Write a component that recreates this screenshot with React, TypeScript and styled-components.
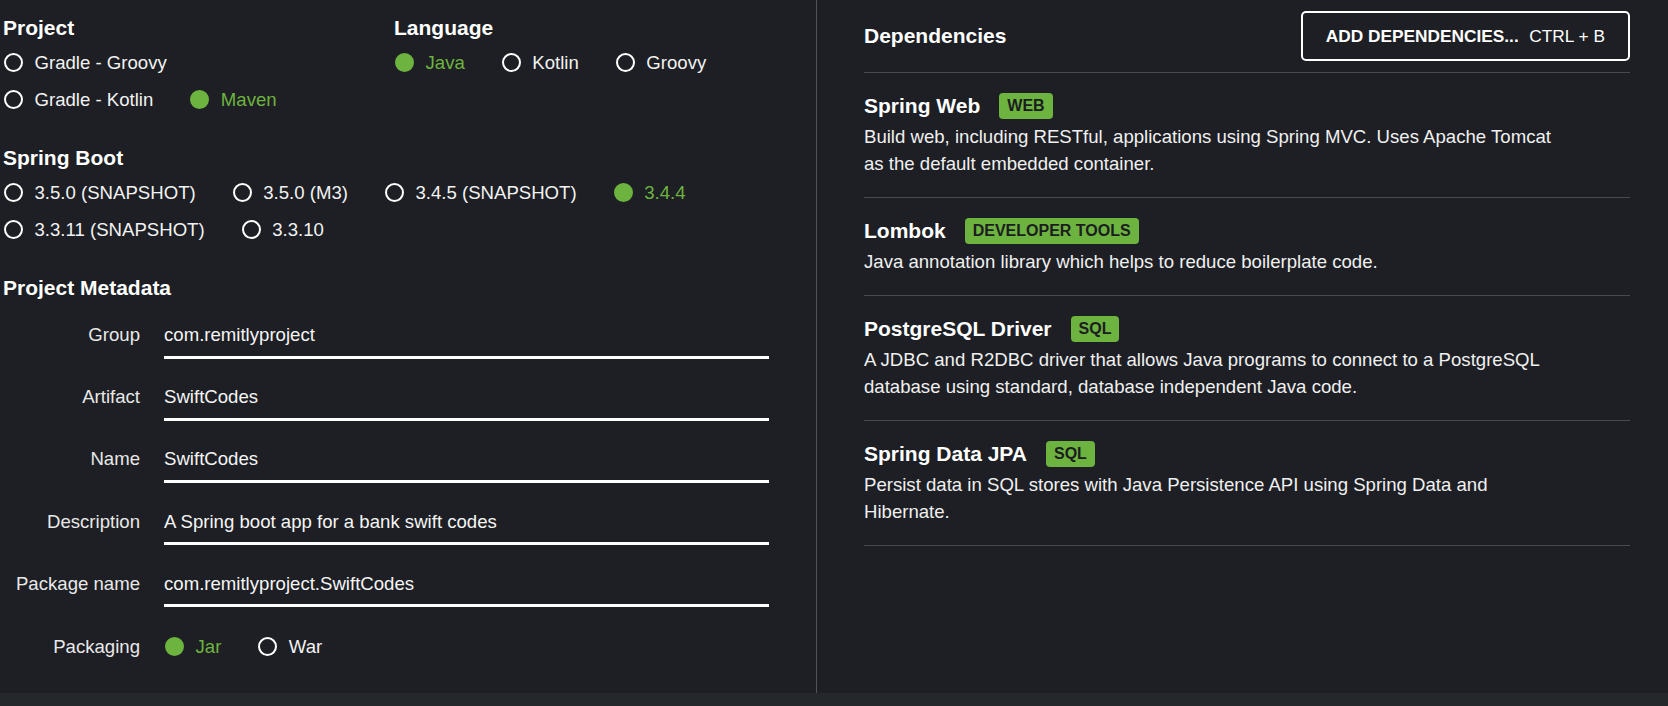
import React from 'react';
import styled, { createGlobalStyle } from 'styled-components';

const GlobalStyle = createGlobalStyle`
  html, body {
    margin: 0;
    padding: 0;
    background: #1d1f24;
    overflow: hidden;
  }
  body {
    font-family: "Liberation Sans", Arial, sans-serif;
    color: #f2f2f2;
  }
  * { box-sizing: border-box; }
`;

const GREEN = '#6db33f';

const Page = styled.div`
  width: 1668px;
  height: 706px;
  display: flex;
  flex-direction: column;
  background: #1d1f24;
`;

const Main = styled.div`
  display: grid;
  grid-template-columns: 817px 1fr;
  height: 693px;
`;

const Footer = styled.div`
  height: 13px;
  background: #25282b;
`;

const LeftPanel = styled.div`
  border-right: 1px solid #505358;
  padding: 16px 0 0 3px;
  display: flex;
  flex-direction: column;
  gap: 28px;
`;

const TopGrid = styled.div`
  display: grid;
  grid-template-columns: 391px 1fr;
`;

const Section = styled.section`
  display: flex;
  flex-direction: column;
`;

const Heading = styled.h2`
  margin: 0 0 4px;
  font-size: 21px;
  line-height: 24px;
  font-weight: 700;
  color: #ffffff;
`;

const RadioRow = styled.div<{ $h?: number }>`
  display: flex;
  align-items: center;
  gap: 36px;
  height: ${(p) => p.$h ?? 37}px;
`;

const RadioItem = styled.label<{ $on?: boolean }>`
  display: inline-flex;
  align-items: center;
  gap: 11.5px;
  font-size: 18.6px;
  line-height: 24px;
  color: ${(p) => (p.$on ? GREEN : '#f2f2f2')};
  white-space: nowrap;
`;

const Circle = styled.span<{ $on?: boolean }>`
  display: inline-block;
  width: 19px;
  height: 19px;
  margin-left: 1px;
  border-radius: 50%;
  border: ${(p) => (p.$on ? `2px solid ${GREEN}` : '2px solid #ffffff')};
  background: ${(p) => (p.$on ? GREEN : 'transparent')};
`;

const Fields = styled.div`
  display: flex;
  flex-direction: column;
  gap: 26.7px;
  padding-top: 19px;
`;

const FieldRow = styled.div<{ $center?: boolean; $h?: number }>`
  display: grid;
  grid-template-columns: 137px 605px;
  column-gap: 24px;
  align-items: ${(p) => (p.$center ? 'center' : 'start')};
  ${(p) => (p.$h ? `height: ${p.$h}px;` : '')}
`;

const FieldLabel = styled.div`
  text-align: right;
  font-size: 18.6px;
  line-height: 24px;
  color: #e8e8e8;
  white-space: nowrap;
`;

const FieldValue = styled.div`
  font-size: 18.6px;
  line-height: 24px;
  color: #f5f5f5;
  padding-bottom: 8.5px;
  border-bottom: 3px solid #ffffff;
  white-space: nowrap;
`;

const RightPanel = styled.div`
  padding: 11px 38px 0 47px;
  display: flex;
  flex-direction: column;
`;

const DepHeader = styled.div`
  display: flex;
  align-items: center;
  justify-content: space-between;
  padding-bottom: 11px;
  border-bottom: 1px solid #474a4f;
`;

const DepTitle = styled.h2`
  margin: 0;
  font-size: 21px;
  line-height: 24px;
  font-weight: 700;
  color: #ffffff;
`;

const AddButton = styled.button`
  height: 50px;
  display: flex;
  align-items: center;
  gap: 10.6px;
  padding: 0 23px;
  border: 2px solid #ffffff;
  border-radius: 5px;
  background: transparent;
  color: #ffffff;
  font-family: "Liberation Sans", Arial, sans-serif;
  font-size: 17.3px;
  cursor: pointer;
`;

const ButtonMain = styled.span`
  font-weight: 700;
`;

const ButtonShortcut = styled.span`
  font-weight: 400;
`;

const DepItem = styled.div`
  padding: 20px 0;
  border-bottom: 1px solid #474a4f;
`;

const DepTitleRow = styled.div`
  display: flex;
  align-items: center;
  gap: 19px;
  height: 26px;
`;

const DepName = styled.span`
  font-size: 21px;
  line-height: 26px;
  font-weight: 700;
  color: #ffffff;
`;

const Badge = styled.span`
  display: inline-block;
  height: 26px;
  line-height: 26px;
  padding: 0 8px;
  border-radius: 4px;
  background: ${GREEN};
  color: #1b1d21;
  font-size: 16px;
  font-weight: 700;
`;

const DepDesc = styled.p`
  margin: 4px 0 0;
  max-width: 705px;
  font-size: 18.6px;
  line-height: 27px;
  color: #f0f0f0;
`;

type Opt = { label: string; on?: boolean };

const Radio: React.FC<Opt> = ({ label, on }) => (
  <RadioItem $on={on}>
    <Circle $on={on} />
    {label}
  </RadioItem>
);

const RadioGroup: React.FC<{ rows: Opt[][] }> = ({ rows }) => (
  <>
    {rows.map((row, i) => (
      <RadioRow key={i}>
        {row.map((o) => (
          <Radio key={o.label} {...o} />
        ))}
      </RadioRow>
    ))}
  </>
);

const fields = [
  { label: 'Group', value: 'com.remitlyproject' },
  { label: 'Artifact', value: 'SwiftCodes' },
  { label: 'Name', value: 'SwiftCodes' },
  { label: 'Description', value: 'A Spring boot app for a bank swift codes' },
  { label: 'Package name', value: 'com.remitlyproject.SwiftCodes' },
];

const deps = [
  {
    name: 'Spring Web',
    tag: 'WEB',
    desc: 'Build web, including RESTful, applications using Spring MVC. Uses Apache Tomcat as the default embedded container.',
  },
  {
    name: 'Lombok',
    tag: 'DEVELOPER TOOLS',
    desc: 'Java annotation library which helps to reduce boilerplate code.',
  },
  {
    name: 'PostgreSQL Driver',
    tag: 'SQL',
    desc: 'A JDBC and R2DBC driver that allows Java programs to connect to a PostgreSQL database using standard, database independent Java code.',
  },
  {
    name: 'Spring Data JPA',
    tag: 'SQL',
    desc: 'Persist data in SQL stores with Java Persistence API using Spring Data and Hibernate.',
  },
];

export default function App() {
  return (
    <>
      <GlobalStyle />
      <Page>
        <Main>
          <LeftPanel>
            <TopGrid>
              <Section>
                <Heading>Project</Heading>
                <RadioGroup
                  rows={[
                    [{ label: 'Gradle - Groovy' }],
                    [{ label: 'Gradle - Kotlin' }, { label: 'Maven', on: true }],
                  ]}
                />
              </Section>
              <Section>
                <Heading>Language</Heading>
                <RadioGroup
                  rows={[[{ label: 'Java', on: true }, { label: 'Kotlin' }, { label: 'Groovy' }]]}
                />
              </Section>
            </TopGrid>
            <Section>
              <Heading>Spring Boot</Heading>
              <RadioGroup
                rows={[
                  [
                    { label: '3.5.0 (SNAPSHOT)' },
                    { label: '3.5.0 (M3)' },
                    { label: '3.4.5 (SNAPSHOT)' },
                    { label: '3.4.4', on: true },
                  ],
                  [{ label: '3.3.11 (SNAPSHOT)' }, { label: '3.3.10' }],
                ]}
              />
            </Section>
            <Section>
              <Heading>Project Metadata</Heading>
              <Fields>
                {fields.map((f) => (
                  <FieldRow key={f.label}>
                    <FieldLabel>{f.label}</FieldLabel>
                    <FieldValue>{f.value}</FieldValue>
                  </FieldRow>
                ))}
                <FieldRow $center $h={25.4}>
                  <FieldLabel>Packaging</FieldLabel>
                  <RadioRow $h={25.4}>
                    <Radio label="Jar" on />
                    <Radio label="War" />
                  </RadioRow>
                </FieldRow>
              </Fields>
            </Section>
          </LeftPanel>
          <RightPanel>
            <DepHeader>
              <DepTitle>Dependencies</DepTitle>
              <AddButton>
                <ButtonMain>ADD DEPENDENCIES...</ButtonMain>
                <ButtonShortcut>CTRL + B</ButtonShortcut>
              </AddButton>
            </DepHeader>
            {deps.map((d) => (
              <DepItem key={d.name}>
                <DepTitleRow>
                  <DepName>{d.name}</DepName>
                  <Badge>{d.tag}</Badge>
                </DepTitleRow>
                <DepDesc>{d.desc}</DepDesc>
              </DepItem>
            ))}
          </RightPanel>
        </Main>
        <Footer />
      </Page>
    </>
  );
}
